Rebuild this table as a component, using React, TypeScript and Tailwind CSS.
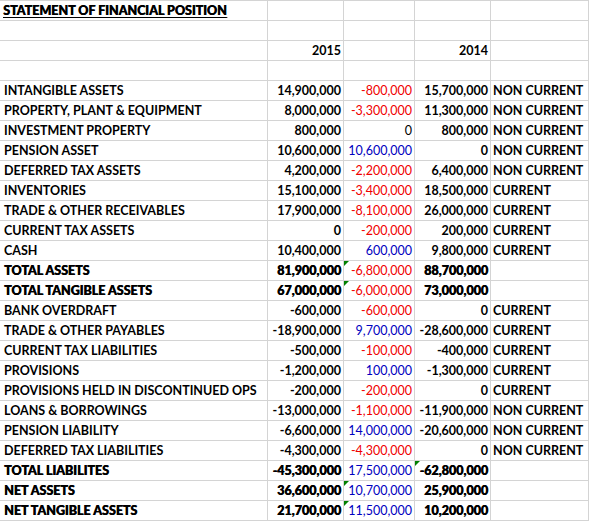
import React from 'react'

type Tone = 'red' | 'blue' | 'plain'
type Row = {
  label?: string
  a?: string
  diff?: string
  tone?: Tone
  b?: string
  kind?: string
  total?: boolean
  flagDiff?: boolean
  flagB?: boolean
}

const rows: Row[] = [
  {},
  { a: '2015', b: '2014' },
  {},
  { label: 'INTANGIBLE ASSETS', a: '14,900,000', diff: '-800,000', tone: 'red', b: '15,700,000', kind: 'NON CURRENT' },
  { label: 'PROPERTY, PLANT & EQUIPMENT', a: '8,000,000', diff: '-3,300,000', tone: 'red', b: '11,300,000', kind: 'NON CURRENT' },
  { label: 'INVESTMENT PROPERTY', a: '800,000', diff: '0', tone: 'plain', b: '800,000', kind: 'NON CURRENT' },
  { label: 'PENSION ASSET', a: '10,600,000', diff: '10,600,000', tone: 'blue', b: '0', kind: 'NON CURRENT' },
  { label: 'DEFERRED TAX ASSETS', a: '4,200,000', diff: '-2,200,000', tone: 'red', b: '6,400,000', kind: 'NON CURRENT' },
  { label: 'INVENTORIES', a: '15,100,000', diff: '-3,400,000', tone: 'red', b: '18,500,000', kind: 'CURRENT' },
  { label: 'TRADE & OTHER RECEIVABLES', a: '17,900,000', diff: '-8,100,000', tone: 'red', b: '26,000,000', kind: 'CURRENT' },
  { label: 'CURRENT TAX ASSETS', a: '0', diff: '-200,000', tone: 'red', b: '200,000', kind: 'CURRENT' },
  { label: 'CASH', a: '10,400,000', diff: '600,000', tone: 'blue', b: '9,800,000', kind: 'CURRENT' },
  { label: 'TOTAL ASSETS', a: '81,900,000', diff: '-6,800,000', tone: 'red', b: '88,700,000', total: true, flagDiff: true },
  { label: 'TOTAL TANGIBLE ASSETS', a: '67,000,000', diff: '-6,000,000', tone: 'red', b: '73,000,000', total: true, flagDiff: true },
  { label: 'BANK OVERDRAFT', a: '-600,000', diff: '-600,000', tone: 'red', b: '0', kind: 'CURRENT' },
  { label: 'TRADE & OTHER PAYABLES', a: '-18,900,000', diff: '9,700,000', tone: 'blue', b: '-28,600,000', kind: 'CURRENT' },
  { label: 'CURRENT TAX LIABILITIES', a: '-500,000', diff: '-100,000', tone: 'red', b: '-400,000', kind: 'CURRENT' },
  { label: 'PROVISIONS', a: '-1,200,000', diff: '100,000', tone: 'blue', b: '-1,300,000', kind: 'CURRENT' },
  { label: 'PROVISIONS HELD IN DISCONTINUED OPS', a: '-200,000', diff: '-200,000', tone: 'red', b: '0', kind: 'CURRENT' },
  { label: 'LOANS & BORROWINGS', a: '-13,000,000', diff: '-1,100,000', tone: 'red', b: '-11,900,000', kind: 'NON CURRENT' },
  { label: 'PENSION LIABILITY', a: '-6,600,000', diff: '14,000,000', tone: 'blue', b: '-20,600,000', kind: 'NON CURRENT' },
  { label: 'DEFERRED TAX LIABILITIES', a: '-4,300,000', diff: '-4,300,000', tone: 'red', b: '0', kind: 'NON CURRENT' },
  { label: 'TOTAL LIABILITES', a: '-45,300,000', diff: '17,500,000', tone: 'blue', b: '-62,800,000', total: true, flagB: true },
  { label: 'NET ASSETS', a: '36,600,000', diff: '10,700,000', tone: 'blue', b: '25,900,000', total: true, flagDiff: true },
  { label: 'NET TANGIBLE ASSETS', a: '21,700,000', diff: '11,500,000', tone: 'blue', b: '10,200,000', total: true, flagDiff: true },
]

const toneClass: Record<Tone, string> = {
  red: 'text-[#f00000]',
  blue: 'text-[#0000c0]',
  plain: 'text-black',
}

// heavy weight used by the title and total lines
const heavy = 'font-black [text-shadow:0.5px_0_0_#000]'

const Flag = () => (
  <span className="absolute left-0 top-0 h-0 w-0 border-t-[5px] border-r-[5px] border-t-[#008000] border-r-transparent" />
)

export default function App() {
  return (
    <div className="h-[522px] w-[590px] bg-white font-['Lato','Liberation_Sans',sans-serif] text-[12.5px] leading-[19px] text-black">
      <div className="grid w-[589px] grid-cols-[267px_75px_70px_75px_97px] gap-px bg-[#d4d4d4] pt-px pr-px pb-px">
        {/* title row */}
        <div className={`h-[19px] bg-white pl-[3px] pt-px leading-[18px] underline underline-offset-2 ${heavy}`}>
          STATEMENT OF FINANCIAL POSITION
        </div>
        <div className="bg-white" />
        <div className="bg-white" />
        <div className="bg-white" />
        <div className="bg-white" />
        {rows.map((r, i) => (
          <React.Fragment key={i}>
            <div className={`h-[19px] truncate bg-white pl-[4px] pt-px leading-[18px] ${r.total ? heavy : 'font-bold'}`}>{r.label}</div>
            <div className={`bg-white pr-[2px] pt-px text-right leading-[18px] ${r.total ? heavy : 'font-bold'}`}>{r.a}</div>
            <div className={`relative bg-white pr-[2px] pt-px text-right leading-[18px] ${r.tone ? toneClass[r.tone] : ''}`}>
              {r.flagDiff && <Flag />}
              {r.diff}
            </div>
            <div className={`relative bg-white pr-[2px] pt-px text-right leading-[18px] ${r.total ? heavy : 'font-bold'}`}>
              {r.flagB && <Flag />}
              {r.b}
            </div>
            <div className="bg-white pl-[2px] pt-px leading-[18px] font-bold">{r.kind}</div>
          </React.Fragment>
        ))}
      </div>
    </div>
  )
}
